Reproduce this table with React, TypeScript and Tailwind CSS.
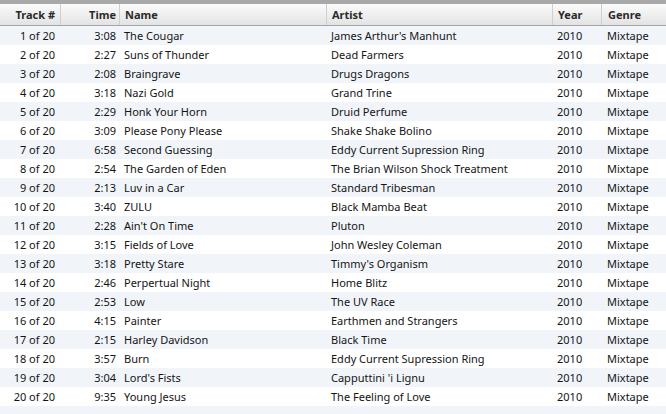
import React from "react";

const rows: [string, string, string][] = [
  ["3:08", "The Cougar", "James Arthur's Manhunt"],
  ["2:27", "Suns of Thunder", "Dead Farmers"],
  ["2:08", "Braingrave", "Drugs Dragons"],
  ["3:18", "Nazi Gold", "Grand Trine"],
  ["2:29", "Honk Your Horn", "Druid Perfume"],
  ["3:09", "Please Pony Please", "Shake Shake Bolino"],
  ["6:58", "Second Guessing", "Eddy Current Supression Ring"],
  ["2:54", "The Garden of Eden", "The Brian Wilson Shock Treatment"],
  ["2:13", "Luv in a Car", "Standard Tribesman"],
  ["3:40", "ZULU", "Black Mamba Beat"],
  ["2:28", "Ain't On Time", "Pluton"],
  ["3:15", "Fields of Love", "John Wesley Coleman"],
  ["3:18", "Pretty Stare", "Timmy's Organism"],
  ["2:46", "Perpertual Night", "Home Blitz"],
  ["2:53", "Low", "The UV Race"],
  ["4:15", "Painter", "Earthmen and Strangers"],
  ["2:15", "Harley Davidson", "Black Time"],
  ["3:57", "Burn", "Eddy Current Supression Ring"],
  ["3:04", "Lord's Fists", "Capputtini 'i Lignu"],
  ["9:35", "Young Jesus", "The Feeling of Love"],
];

const cols = "grid grid-cols-[60px_59px_207px_226px_49px_65px]";

export default function App() {
  return (
    <div
      className="w-[666px] h-[414px] overflow-hidden bg-white text-[11px] text-[#141414]"
      style={{ fontFamily: '"Lucida Grande", "Noto Sans", "DejaVu Sans", sans-serif' }}
    >
      <div className="h-[4px] bg-[#a9a9a9]" />
      <div
        className={`${cols} h-[22px] border-b border-[#a5a5a5] bg-gradient-to-b from-[#fbfbfb] to-[#e3e3e3] font-bold text-[#2a2a2a] leading-[21px]`}
      >
        <div className="text-right pr-[5px]">Track #</div>
        <div className="text-right pr-[3px] border-l border-[#cfcfcf]">Time</div>
        <div className="pl-[5px] border-l border-[#cfcfcf]">Name</div>
        <div className="pl-[5px] border-l border-[#cfcfcf]">Artist</div>
        <div className="pl-[5px] border-l border-[#cfcfcf]">Year</div>
        <div className="pl-[6px] border-l border-[#cfcfcf]">Genre</div>
      </div>
      {rows.map((r, i) => (
        <div
          key={i}
          className={`${cols} h-[19px] leading-[19px] whitespace-nowrap ${i % 2 === 0 ? "bg-[#f1f5fa]" : "bg-white"}`}
        >
          <div className="text-right pr-[5px]">{i + 1} of 20</div>
          <div className="text-right pr-[3px]">{r[0]}</div>
          <div className="pl-[5px]">{r[1]}</div>
          <div className="pl-[5px]">{r[2]}</div>
          <div className="pl-[5px]">2010</div>
          <div className="pl-[6px]">Mixtape</div>
        </div>
      ))}
      <div className="h-[19px] bg-[#f1f5fa]" />
    </div>
  );
}
